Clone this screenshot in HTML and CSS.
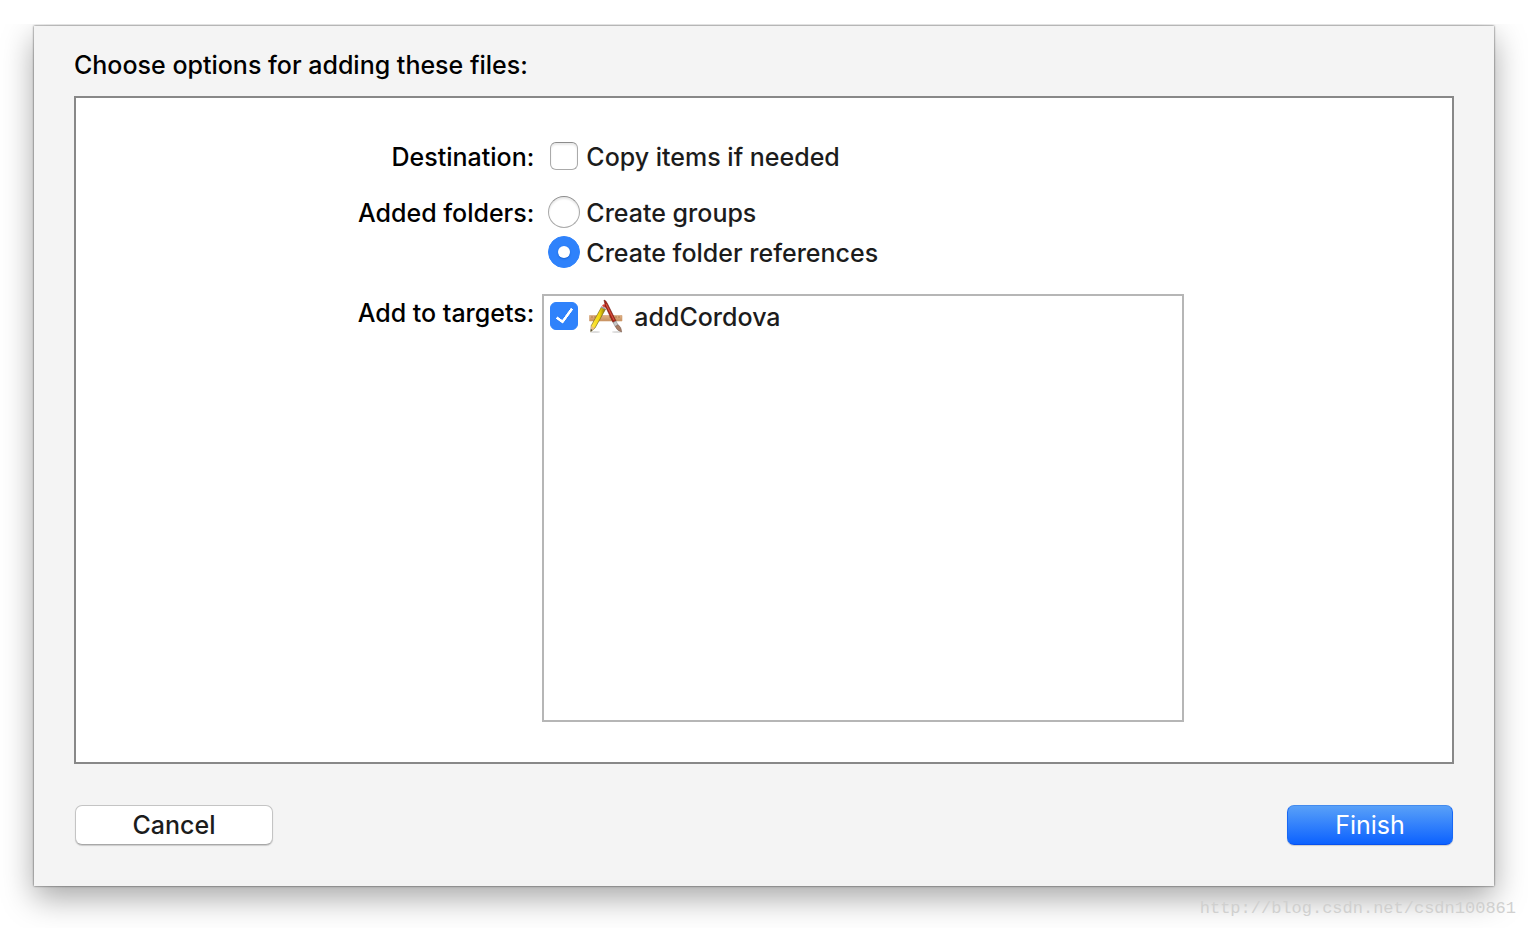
FILE: index.html
```html
<!DOCTYPE html>
<html lang="en">
<head>
<meta charset="utf-8">
<title>Add Files</title>
<link rel="stylesheet" href="styles.css">
</head>
<body>
<div class="stage">
  <form class="sheet">
    <h1 class="title">Choose options for adding these files:</h1>
    <div class="panel">
      <span class="label">Destination:</span>
      <label class="option"><input class="check" type="checkbox"><span class="text">Copy items if needed</span></label>
      <span class="label" id="folders">Added folders:</span>
      <div class="radios" role="radiogroup" aria-labelledby="folders">
        <label class="option"><input class="radio" type="radio" name="folders"><span class="text">Create groups</span></label>
        <label class="option"><input class="radio" type="radio" name="folders" checked><span class="text">Create folder references</span></label>
      </div>
      <span class="label targets-label" id="targets">Add to targets:</span>
      <div class="targets" role="group" aria-labelledby="targets">
        <label class="option target">
          <input class="check" type="checkbox" checked>
          <svg class="app-icon" viewBox="0 0 36 36" aria-hidden="true">
            <defs>
              <linearGradient id="wood" x1="0" y1="0" x2="0" y2="1"><stop offset="0" stop-color="#e0b185"/><stop offset="1" stop-color="#c68f5f"/></linearGradient>
              <linearGradient id="pencil" x1="0" y1="0" x2="1" y2="0"><stop offset="0" stop-color="#ffe84a"/><stop offset=".6" stop-color="#f3d60b"/><stop offset="1" stop-color="#87720c"/></linearGradient>
            </defs>
            <ellipse cx="7" cy="34" rx="5" ry="1" fill="#ddd"/>
            <ellipse cx="29" cy="34" rx="5" ry="1" fill="#ddd"/>
            <path d="M1.500 17.500h32.500v5.500h-32.500z" fill="url(#wood)" stroke="#d09e70" stroke-width=".6"/>
            <path d="M4 18v2M7 18v2M10 18v2M22 18v2M28 18v2M31 18v2" stroke="#a06b3d" stroke-width=".7"/>
            <path d="M13.500 9l4 2.200L7 30l-4.200 3.500.5-6z" fill="url(#pencil)" stroke="#665915" stroke-width=".6"/>
            <path d="M3.300 28l3.400 2-4 3.500z" fill="#e9bd87"/>
            <path d="M2.900 31l1.600 1-1.900 1.600z" fill="#333"/>
            <path d="M14 8l1-1.500q2-1 3.300.7L17.500 10z" fill="#d84338"/>
            <path d="M13.500 8.200l4.200 2-.8 1.400-4.200-2.200z" fill="#9c9da0"/>
            <path d="M16 2q2 .3 3.500 3.800L28 23l-3 1.500L17.500 8.500z" fill="#ae2317" stroke="#64150f" stroke-width=".6"/>
            <path d="M18 6l8 16" stroke="#dc614c" stroke-width=".9"/>
            <path d="M25 24.500l3-1.500 2 4-2.800 1.500z" fill="#c8c7c6" stroke="#777" stroke-width=".5"/>
            <path d="M27.200 28.500l3-1.700q3.300 2.200 3.500 7.200-4.300-.8-6.500-5.500z" fill="#a77d65" stroke="#775b4e" stroke-width=".5"/>
          </svg>
          <span class="text">addCordova</span>
        </label>
      </div>
    </div>
    <div class="actions">
      <button class="button cancel" type="button">Cancel</button>
      <button class="button finish" type="submit">Finish</button>
    </div>
  </form>
  <a class="watermark" href="http://blog.csdn.net/csdn100861">http://blog.csdn.net/csdn100861</a>
</div>
</body>
</html>
```
FILE: styles.css
```css
* { box-sizing: border-box; }
body {
  margin: 0;
  background: #fff;
  font: 500 25px/32px Inter, "Liberation Sans", sans-serif;
  color: #1c1c1c;
}
.stage {
  display: flex;
  flex-direction: column;
  min-height: 100vh;
  padding: 26px 34px 0;
}
.sheet {
  flex: 1;
  display: flex;
  flex-direction: column;
  padding: 23px 40px 41px;
  background: #f4f4f4;
  box-shadow: 0 0 2px rgba(0, 0, 0, .7), 0 12px 30px rgba(0, 0, 0, .35);
  clip-path: inset(-2px -34px -42px -34px);
}
.title {
  margin: 0 0 15px;
  font: inherit;
  color: #000;
}
.panel {
  flex: 1;
  display: grid;
  grid-template-columns: 5fr 7fr;
  grid-template-rows: auto auto 1fr;
  gap: 23px 8px;
  padding: 42px 268px 40px 0;
  background: #fff;
  border: 2px solid #888;
}
.label { padding-top: 1px; text-align: right; color: #000; }
.text { padding-top: 2px; }
.radios { display: grid; gap: 8px; padding-bottom: 3px; }
.option {
  display: flex;
  align-items: center;
  gap: 8px;
  height: 32px;
  padding-left: 8px;
}
.check, .radio {
  appearance: none;
  flex: none;
  display: grid;
  place-items: center;
  margin: 0;
  background: #fff;
  border: 1px solid #aaa;
  border-top-color: #8c8c8c;
  box-shadow: inset 0 2px 2px #e9e9e9;
}
.check { width: 28px; height: 28px; border-radius: 6px; }
.radio { width: 32px; height: 32px; margin: 0 -2px; border-radius: 50%; }
.check:checked, .radio:checked { background: #2f82fb; border-color: #2f82fb; box-shadow: none; }
.check:checked::after {
  content: "";
  width: 6px;
  height: 15px;
  margin-bottom: 4px;
  border: solid #fff;
  border-width: 0 3px 3px 0;
  border-radius: 1px;
  transform: rotate(36deg);
}
.radio:checked::after {
  content: "";
  width: 12px;
  height: 12px;
  border-radius: 50%;
  background: #fff;
  box-shadow: 0 1px 2px #1762ce;
}
.targets-label { padding-top: 3px; }
.targets { padding: 4px 0; border: 2px solid #b6b6b6; }
.target { padding-left: 6px; }
.app-icon { width: 36px; height: 36px; margin: 0 2px; }
.actions { display: flex; justify-content: space-between; padding: 41px 1px 0; }
.button {
  height: 40px;
  padding: 0;
  font: inherit;
  border: 1px solid #c4c4c4;
  border-radius: 7px;
}
.cancel {
  width: 198px;
  color: #1c1c1c;
  background: #fff;
  border-bottom-color: #a8a8a8;
  box-shadow: 0 1px 1px #ccc;
}
.finish {
  width: 166px;
  font-weight: 400;
  color: #fff;
  background: linear-gradient(#5ba2f8, #0a60ff) border-box;
  border-color: #438bee #1768f5 #0751ee;
  box-shadow: 0 1px 1px #ccc;
}
.watermark {
  align-self: flex-end;
  height: 42px;
  margin-right: -22px;
  padding-top: 13px;
  font: 17px/20px "Liberation Mono", monospace;
  color: #d0d0cf;
  text-decoration: none;
  z-index: 1;
}
```
